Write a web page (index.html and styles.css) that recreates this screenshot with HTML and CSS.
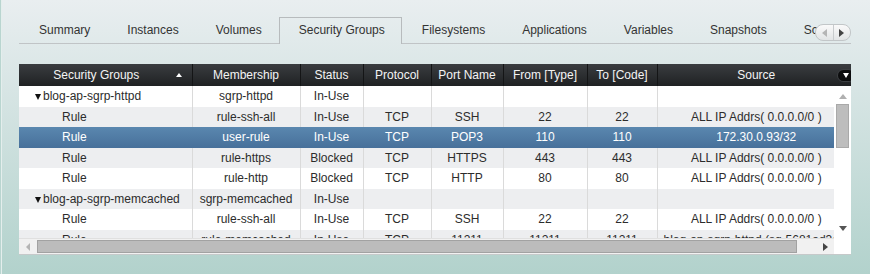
FILE: index.html
```html
<!DOCTYPE html>
<html lang="en">
<head>
  <meta charset="UTF-8">
  <title>Security Groups</title>
  <link rel="stylesheet" href="styles.css">
</head>
<body>
  <div class="page">
    <div class="tabbar">
      <div class="tabs">
        <span class="tab">Summary</span>
        <span class="tab">Instances</span>
        <span class="tab">Volumes</span>
        <span class="tab active">Security Groups</span>
        <span class="tab">Filesystems</span>
        <span class="tab">Applications</span>
        <span class="tab">Variables</span>
        <span class="tab">Snapshots</span>
        <span class="tab">Scripts</span>
      </div>
      <div class="tab-scroll">
        <span class="ts-btn"><i class="tri-left off"></i></span>
        <span class="ts-btn"><i class="tri-right"></i></span>
      </div>
    </div>

    <div class="grid">
      <div class="grid-head">
        <table>
          <colgroup>
            <col class="c-name"><col class="c-member"><col class="c-status"><col class="c-proto">
            <col class="c-port"><col class="c-from"><col class="c-to"><col class="c-source">
          </colgroup>
          <tr>
            <th class="sorted">Security Groups<i class="sort-asc"></i></th>
            <th>Membership</th>
            <th>Status</th>
            <th>Protocol</th>
            <th>Port Name</th>
            <th>From [Type]</th>
            <th>To [Code]</th>
            <th>Source</th>
          </tr>
        </table>
        <span class="col-menu"><i class="tri-down white"></i></span>
      </div>

      <div class="grid-body">
        <table>
          <colgroup>
            <col class="c-name"><col class="c-member"><col class="c-status"><col class="c-proto">
            <col class="c-port"><col class="c-from"><col class="c-to"><col class="c-source">
          </colgroup>
          <tr class="group">
            <td class="name"><i class="tri-down"></i>blog-ap-sgrp-httpd</td>
            <td>sgrp-httpd</td><td>In-Use</td><td></td><td></td><td></td><td></td><td></td>
          </tr>
          <tr class="alt">
            <td class="name rule">Rule</td>
            <td>rule-ssh-all</td><td>In-Use</td><td>TCP</td><td>SSH</td><td>22</td><td>22</td><td>ALL IP Addrs( 0.0.0.0/0 )</td>
          </tr>
          <tr class="selected">
            <td class="name rule">Rule</td>
            <td>user-rule</td><td>In-Use</td><td>TCP</td><td>POP3</td><td>110</td><td>110</td><td>172.30.0.93/32</td>
          </tr>
          <tr class="alt">
            <td class="name rule">Rule</td>
            <td>rule-https</td><td>Blocked</td><td>TCP</td><td>HTTPS</td><td>443</td><td>443</td><td>ALL IP Addrs( 0.0.0.0/0 )</td>
          </tr>
          <tr>
            <td class="name rule">Rule</td>
            <td>rule-http</td><td>Blocked</td><td>TCP</td><td>HTTP</td><td>80</td><td>80</td><td>ALL IP Addrs( 0.0.0.0/0 )</td>
          </tr>
          <tr class="group alt">
            <td class="name"><i class="tri-down"></i>blog-ap-sgrp-memcached</td>
            <td>sgrp-memcached</td><td>In-Use</td><td></td><td></td><td></td><td></td><td></td>
          </tr>
          <tr>
            <td class="name rule">Rule</td>
            <td>rule-ssh-all</td><td>In-Use</td><td>TCP</td><td>SSH</td><td>22</td><td>22</td><td>ALL IP Addrs( 0.0.0.0/0 )</td>
          </tr>
          <tr class="alt">
            <td class="name rule">Rule</td>
            <td>rule-memcached</td><td>In-Use</td><td>TCP</td><td>11211</td><td>11211</td><td>11211</td><td class="long">blog-ap-sgrp-httpd (sg-5681ad3c)</td>
          </tr>
        </table>
      </div>

      <div class="vscroll">
        <i class="tri-up off"></i>
        <span class="v-thumb"></span>
        <i class="tri-down dark"></i>
      </div>
      <div class="hscroll">
        <i class="tri-left off"></i>
        <span class="h-thumb"></span>
        <i class="tri-right"></i>
      </div>
      <div class="corner"></div>
    </div>
  </div>
</body>
</html>
```

FILE: styles.css
```css
html {
  height: 100%;
}
body {
  margin: 0;
  height: 274px;
  overflow: hidden;
  font-family: "Liberation Sans", Arial, sans-serif;
  font-size: 12px;
  color: #2c2c2c;
  background: linear-gradient(#e9eef0, #b2d2cc) fixed;
}
.page {
  height: 100%;
  padding-left: 19px;
  box-shadow: inset 1px 0 #b9d5d0, inset 2px 0 #e4eeec;
}

/* tabs */
.tabbar {
  position: relative;
  width: 832px;
  padding-top: 17px;
}
.tabs {
  display: flex;
  height: 27px;
  overflow: hidden;
  box-shadow: inset 0 -1px #c0c4c6;
}
.tab {
  flex-shrink: 0;
  padding: 0 16px 0 19px;
  line-height: 25px;
  white-space: nowrap;
  color: #333;
  border: 1px solid transparent;
  border-bottom: none;
}
.tab.active {
  border-color: #b7bbbd;
  background: linear-gradient(#e9eef0, #b2d2cc) fixed;
}
.tab-scroll {
  position: absolute;
  right: 0;
  top: 24px;
  display: flex;
  width: 34px;
  height: 15px;
  border: 1px solid #c2c6c8;
  border-radius: 8px;
  background: linear-gradient(#fafafa, #e2e4e5);
  overflow: hidden;
}
.ts-btn {
  flex: 1;
  display: flex;
  align-items: center;
  justify-content: center;
}
.ts-btn + .ts-btn {
  border-left: 1px solid #c8cbcd;
}

/* small triangles */
.tri-left, .tri-right, .tri-up, .tri-down, .sort-asc {
  display: inline-block;
  width: 0;
  height: 0;
}
.tri-left {
  border-top: 4px solid transparent;
  border-bottom: 4px solid transparent;
  border-right: 5px solid #444;
}
.tri-right {
  border-top: 4px solid transparent;
  border-bottom: 4px solid transparent;
  border-left: 5px solid #444;
}
.tri-up {
  border-left: 4px solid transparent;
  border-right: 4px solid transparent;
  border-bottom: 5px solid #555;
}
.tri-down {
  border-left: 4px solid transparent;
  border-right: 4px solid transparent;
  border-top: 6px solid #111;
}
.tri-left.off { border-right-color: #b5b5b5; }
.tri-up.off { border-bottom-color: #b0b0b0; }
.tri-down.dark { border-top-color: #555; border-top-width: 5px; }
.tri-down.white { border-top-color: #fff; border-top-width: 5px; border-left-width: 3px; border-right-width: 3px; }

/* grid */
.grid {
  display: grid;
  grid-template-columns: 815px 17px;
  grid-template-rows: 22px 152px 16px;
  width: 832px;
  margin-top: 20px;
  background: #fff;
  border-bottom: 1px solid #c6c9ca;
}
table {
  width: 836px;
  table-layout: fixed;
  border-collapse: collapse;
}
.c-name { width: 173px; }
.c-member { width: 108px; }
.c-status { width: 63px; }
.c-proto { width: 68px; }
.c-port { width: 72px; }
.c-from { width: 84px; }
.c-to { width: 70px; }
.c-source { width: 198px; }

.grid-head {
  grid-column: 1 / 3;
  position: relative;
  overflow: hidden;
  background: linear-gradient(#3a3d40, #1f2123);
}
.grid-head th {
  height: 22px;
  padding: 0;
  font-weight: normal;
  color: #f4f4f4;
  text-align: center;
  white-space: nowrap;
  border-left: 1px solid #141516;
}
.grid-head th:first-child {
  border-left: none;
}
.grid-head th.sorted {
  position: relative;
  padding-right: 18px;
}
.sort-asc {
  position: absolute;
  left: 157px;
  top: 9px;
  border-left: 3px solid transparent;
  border-right: 3px solid transparent;
  border-bottom: 4px solid #fff;
}
.col-menu {
  position: absolute;
  right: -3px;
  top: 6px;
  width: 16px;
  height: 11px;
  border-radius: 6px;
  background: #0c0d0e;
  box-shadow: 0 0 0 1px #3c3f42;
  display: flex;
  align-items: center;
  justify-content: center;
}

.grid-body {
  overflow: hidden;
}
.grid-body td {
  height: 20.5px;
  padding: 0 6px;
  text-align: center;
  white-space: nowrap;
  border-left: 1px solid #dadada;
}
.grid-body td:first-child {
  border-left: none;
}
.grid-body tr.alt {
  background: #edeef0;
}
.grid-body td.name {
  text-align: left;
  padding-left: 16px;
}
.grid-body td.rule {
  padding-left: 43px;
}
.grid-body td.long {
  text-align: left;
}
.grid-body .name .tri-down {
  border-left-width: 3.5px;
  border-right-width: 3.5px;
  margin-right: 2px;
  vertical-align: 0;
}
.grid-body tr.selected {
  background: linear-gradient(#5a87af, #47709a);
  color: #fff;
}
.grid-body tr.selected td {
  border-left-color: transparent;
}

.vscroll {
  display: flex;
  flex-direction: column;
  align-items: center;
  background: #fff;
}
.vscroll .tri-up {
  margin-top: 8px;
}
.v-thumb {
  width: 11px;
  height: 42px;
  margin-top: 5px;
  background: #bdbdbd;
  border: 1px solid #a9a9a9;
}
.vscroll .tri-down {
  margin-top: auto;
  margin-bottom: 7px;
}

.hscroll {
  display: flex;
  align-items: center;
  background: #f1f1f1;
  border-top: 1px solid #e0e0e0;
}
.hscroll .tri-left {
  margin-left: 7px;
  border-right-width: 4px;
}
.h-thumb {
  width: 758px;
  height: 11px;
  margin-left: 7px;
  background: #bcbcbc;
  border: 1px solid #a2a2a2;
}
.hscroll .tri-right {
  margin-left: auto;
  margin-right: 6px;
}
.corner {
  background: #fff;
}
```
